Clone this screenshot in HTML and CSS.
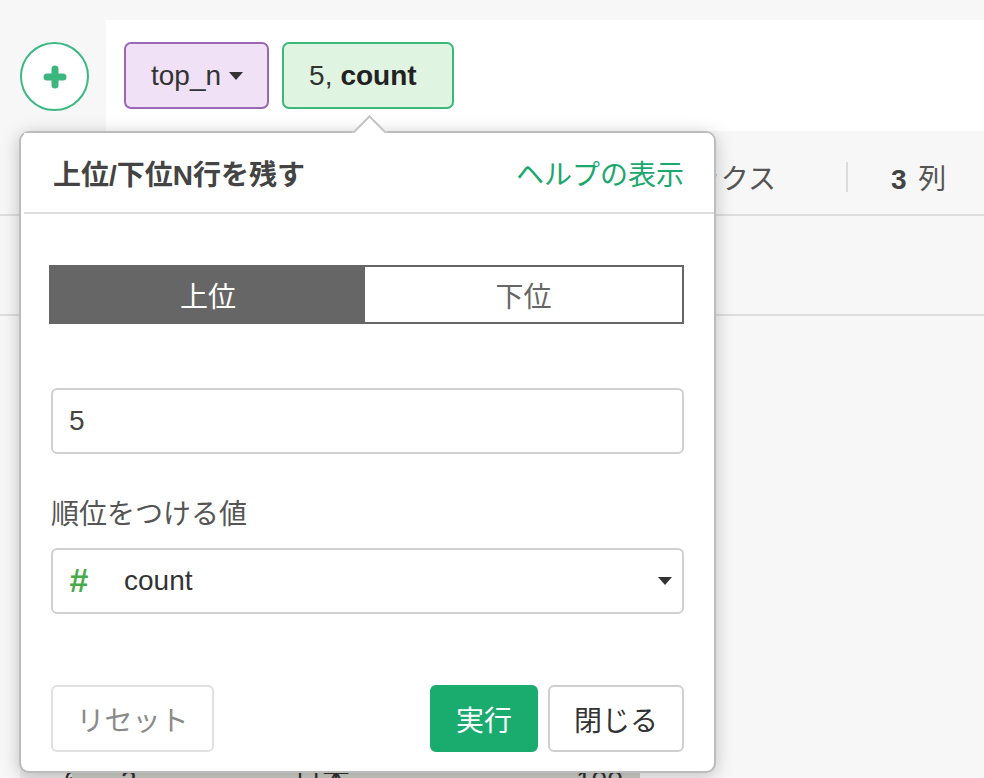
FILE: index.html
```html
<!DOCTYPE html>
<html lang="ja">
<head>
<meta charset="utf-8">
<title>top_n</title>
<link rel="stylesheet" href="styles.css">
</head>
<body>
<div class="app">
  <div class="topbar">
    <div class="rail">
      <button class="add" type="button" aria-label="add">
        <svg width="24" height="24" viewBox="0 0 24 24"><path d="M12 4v16M4 12h16" stroke="#3bb77e" stroke-width="7" stroke-linecap="round" fill="none"/></svg>
      </button>
    </div>
    <div class="steps">
      <div class="chip chip-cmd">top_n <span class="caret"></span></div>
      <div class="chip chip-arg">5, <b>count</b></div>
    </div>
  </div>

  <div class="table">
    <div class="summary">
      <span class="sum-first">ックス</span>
      <span class="sep"></span>
      <span class="sum-cols"><b>3</b> 列</span>
      <span class="sum-next">4</span>
    </div>
    <div class="colhead"></div>
    <div class="rows-gap"></div>
    <div class="datarow">
      <span class="cell c-idx">6</span>
      <span class="cell c-a">2</span>
      <span class="cell c-b">日本</span>
      <span class="cell c-c">100</span>
    </div>
  </div>

  <div class="popover">
    <span class="arrow"></span>
    <div class="pop-head">
      <span class="pop-title">上位/下位N行を残す</span>
      <a class="help">ヘルプの表示</a>
    </div>
    <div class="pop-body">
      <div class="toggle">
        <span class="tog active">上位</span>
        <span class="tog">下位</span>
      </div>
      <div class="field">5</div>
      <div class="label">順位をつける値</div>
      <div class="field select">
        <span class="hash">#</span>
        <span class="sel-val">count</span>
        <span class="caret sel-caret"></span>
      </div>
      <div class="actions">
        <button class="btn btn-reset" type="button">リセット</button>
        <span class="grow"></span>
        <button class="btn btn-run" type="button">実行</button>
        <button class="btn btn-close" type="button">閉じる</button>
      </div>
    </div>
  </div>
</div>
</body>
</html>
```

FILE: styles.css
```css
* { box-sizing: border-box; }
html, body {
  margin: 0;
  padding: 0;
  width: 984px;
  height: 778px;
  overflow: hidden;
  background: #f7f7f7;
  font-family: "Liberation Sans", "Noto Sans CJK JP", sans-serif;
  color: #333;
}
.app {
  position: relative;
  width: 984px;
  height: 778px;
  overflow: hidden;
}

/* top step bar */
.topbar {
  display: flex;
  height: 131px;
}
.rail {
  width: 106px;
  flex: none;
  padding: 42px 0 0 20px;
}
.add {
  width: 69px;
  height: 69px;
  border-radius: 50%;
  border: 2px solid #3cb982;
  background: #fff;
  padding: 0;
  display: flex;
  align-items: center;
  justify-content: center;
}
.steps {
  flex: 1;
  margin-top: 20px;
  background: #fff;
  display: flex;
  align-items: flex-start;
  gap: 13px;
  padding: 22px 0 0 18px;
}
.chip {
  height: 67px;
  border-radius: 7px;
  border: 2px solid;
  display: flex;
  align-items: center;
  font-size: 28px;
  color: #333;
}
.chip-cmd {
  background: #f0e1f6;
  border-color: #9a68b4;
  padding: 0 24px 0 25px;
  gap: 8px;
}
.chip-arg {
  background: #e0f4e2;
  border-color: #3db87b;
  padding: 0 35px 0 25px;
}
.chip-arg b { margin-left: 8px; font-weight: bold; color: #222; }
.caret {
  width: 0;
  height: 0;
  border-left: 7.5px solid transparent;
  border-right: 7.5px solid transparent;
  border-top: 8px solid #333;
}

/* background table */
.table { position: relative; }
.summary {
  height: 85px;
  border-bottom: 2px solid #dedede;
  display: flex;
  align-items: center;
  font-size: 28px;
  color: #555;
  white-space: nowrap;
  padding-top: 8px;
}
.sum-first {
  width: 776px;
  flex: none;
  text-align: right;
}
.sep {
  width: 2px;
  height: 30px;
  background: #dcdcdc;
  margin: 0 43px 0 70px;
  flex: none;
}
.sum-cols { flex: none; }
.sum-cols b { color: #444; margin-right: 4px; }
.sum-next { margin-left: 40px; flex: none; color: #aaa; }
.colhead {
  height: 100px;
  border-bottom: 2px solid #dedede;
}
.rows-gap { height: 435px; }
.datarow {
  display: flex;
  height: 60px;
  margin-left: 20px;
  font-size: 28px;
  color: #333;
  line-height: 60px;
}
.cell { display: block; }
.c-idx { width: 52px; background: #ebebeb; padding-left: 44px; }
.c-a { width: 170px; background: #cbcec6; padding-left: 49px; }
.c-b { width: 300px; background: #cbcec6; padding-left: 52px; }
.c-c { width: 98px; background: #cbcec6; padding-left: 34px; }

/* popover */
.popover {
  position: absolute;
  left: 19px;
  top: 131px;
  width: 697px;
  height: 642px;
  background: #fff;
  border: 2px solid #bcbcbc;
  border-radius: 10px;
  box-shadow: 0 3px 18px rgba(0, 0, 0, 0.22);
}
.arrow {
  position: absolute;
  left: 334px;
  top: -12px;
  width: 29px;
  height: 29px;
  background: #fff;
  border-left: 2px solid #c4c4c4;
  border-top: 2px solid #c4c4c4;
  transform: rotate(45deg);
}
.pop-head {
  position: relative;
  margin-left: 3px;
  height: 81px;
  border-bottom: 2px solid #dddddd;
  display: flex;
  align-items: center;
  justify-content: space-between;
  padding: 0 30px 0 29px;
  background: #fff;
  border-top-right-radius: 8px;
}
.pop-title {
  font-size: 28px;
  font-weight: bold;
  color: #444;
}
.help {
  font-size: 28px;
  color: #1aa86e;
}
.pop-body {
  padding: 0 30px;
}
.toggle {
  margin: 51px 0 0 -2px;
  height: 59px;
  border: 2px solid #666;
  display: flex;
}
.tog {
  flex: 1;
  display: flex;
  align-items: center;
  justify-content: center;
  font-size: 28px;
  color: #666;
  background: #fff;
}
.tog.active {
  flex: 0 0 314px;
  background: #666;
  color: #fff;
}
.field {
  margin-top: 64px;
  height: 66px;
  border: 2px solid #d0d0d0;
  border-radius: 6px;
  display: flex;
  align-items: center;
  padding-left: 16px;
  font-size: 28px;
  color: #444;
}
.label {
  margin-top: 41px;
  height: 40px;
  line-height: 40px;
  font-size: 28px;
  color: #555;
}
.field.select {
  margin-top: 13px;
  padding-right: 10px;
  color: #333;
}
.hash {
  color: #47ab4c;
  font-weight: bold;
  font-style: italic;
  font-size: 34px;
  width: 55px;
  padding-bottom: 2px;
}
.sel-val { flex: 1; }
.sel-caret {
  border-left-width: 7px;
  border-right-width: 7px;
  border-top-width: 8px;
}
.actions {
  margin-top: 71px;
  display: flex;
  gap: 10px;
}
.grow { flex: 1; }
.btn {
  height: 67px;
  padding: 0;
  border-radius: 6px;
  border: 2px solid #ccc;
  background: #fff;
  font-family: "Liberation Sans", "Noto Sans CJK JP", sans-serif;
  font-size: 28px;
  color: #333;
  white-space: nowrap;
}
.btn-reset {
  width: 163px;
  border-color: #e0e0e0;
  color: #8a8a8a;
}
.btn-run {
  width: 108px;
  background: #1aab6f;
  border-color: #1aab6f;
  color: #fff;
}
.btn-close {
  width: 136px;
  border-color: #cfcfcf;
}
```
